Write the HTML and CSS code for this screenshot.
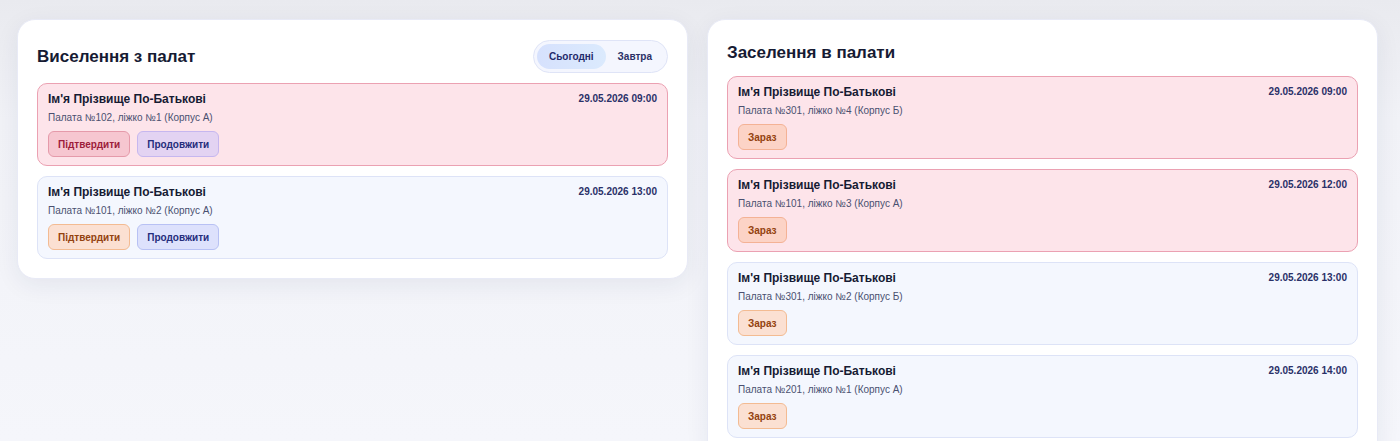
FILE: index.html
```html
<!DOCTYPE html>
<html lang="uk">
<head>
  <meta charset="UTF-8" />
  <meta name="viewport" content="width=device-width, initial-scale=1" />
  <title>Палати</title>
  <link rel="stylesheet" href="styles.css">
</head>
<body>
  <main class="board">
    <section class="panel">
      <div class="panel-head">
        <h2>Виселення з палат</h2>
        <div class="switch">
          <button class="switch-btn active">Сьогодні</button>
          <button class="switch-btn">Завтра</button>
        </div>
      </div>
      <div class="list">
        <div class="item urgent">
          <div class="item-top">
            <span class="name">Ім'я Прізвище По-Батькові</span>
            <span class="time">29.05.2026 09:00</span>
          </div>
          <div class="place">Палата №102, ліжко №1 (Корпус А)</div>
          <div class="actions">
            <button class="act confirm">Підтвердити</button>
            <button class="act extend">Продовжити</button>
          </div>
        </div>
        <div class="item">
          <div class="item-top">
            <span class="name">Ім'я Прізвище По-Батькові</span>
            <span class="time">29.05.2026 13:00</span>
          </div>
          <div class="place">Палата №101, ліжко №2 (Корпус А)</div>
          <div class="actions">
            <button class="act confirm">Підтвердити</button>
            <button class="act extend">Продовжити</button>
          </div>
        </div>
      </div>
    </section>

    <section class="panel">
      <div class="panel-head">
        <h2>Заселення в палати</h2>
      </div>
      <div class="list">
        <div class="item urgent">
          <div class="item-top">
            <span class="name">Ім'я Прізвище По-Батькові</span>
            <span class="time">29.05.2026 09:00</span>
          </div>
          <div class="place">Палата №301, ліжко №4 (Корпус Б)</div>
          <div class="actions">
            <button class="act now">Зараз</button>
          </div>
        </div>
        <div class="item urgent">
          <div class="item-top">
            <span class="name">Ім'я Прізвище По-Батькові</span>
            <span class="time">29.05.2026 12:00</span>
          </div>
          <div class="place">Палата №101, ліжко №3 (Корпус А)</div>
          <div class="actions">
            <button class="act now">Зараз</button>
          </div>
        </div>
        <div class="item">
          <div class="item-top">
            <span class="name">Ім'я Прізвище По-Батькові</span>
            <span class="time">29.05.2026 13:00</span>
          </div>
          <div class="place">Палата №301, ліжко №2 (Корпус Б)</div>
          <div class="actions">
            <button class="act now">Зараз</button>
          </div>
        </div>
        <div class="item">
          <div class="item-top">
            <span class="name">Ім'я Прізвище По-Батькові</span>
            <span class="time">29.05.2026 14:00</span>
          </div>
          <div class="place">Палата №201, ліжко №1 (Корпус А)</div>
          <div class="actions">
            <button class="act now">Зараз</button>
          </div>
        </div>
      </div>
    </section>
  </main>
</body>
</html>
```

FILE: styles.css
```css
html, body {
  margin: 0;
  height: 100%;
}
body {
  font-family: "Liberation Sans", Arial, sans-serif;
  background: linear-gradient(180deg, #e9eaef 0px, #f1f2f7 120px, #f5f6fb 100%);
  color: #1a1f36;
}
.board {
  display: grid;
  grid-template-columns: 1fr 1fr;
  gap: 19px;
  align-items: start;
  padding: 19px 22px 0 17px;
}
.panel {
  background: #fff;
  border: 1px solid #e8eaf6;
  border-radius: 18px;
  padding: 20px 19px 19px 19px;
  box-shadow: 0 6px 24px rgba(30, 40, 90, 0.07);
}
.panel-head {
  display: flex;
  align-items: center;
  justify-content: space-between;
  min-height: 26px;
  margin-bottom: 10px;
}
.panel-head h2 {
  margin: 0;
  font-size: 17px;
  line-height: 26px;
  font-weight: bold;
  color: #161b33;
}
.switch {
  display: flex;
  padding: 3px;
  border: 1px solid #dfe4f7;
  border-radius: 17px;
  background: #f4f6fe;
}
.switch-btn {
  border: none;
  background: transparent;
  font-family: inherit;
  font-size: 10px;
  font-weight: bold;
  color: #2b3166;
  padding: 0 12px;
  height: 25px;
  border-radius: 13px;
  cursor: pointer;
}
.switch-btn.active {
  background: linear-gradient(90deg, #d6e1fd, #dbeafd);
  color: #1f2a6b;
}
.list {
  display: flex;
  flex-direction: column;
  gap: 10px;
}
.item {
  background: #f4f7fe;
  border: 1px solid #dde3f7;
  border-radius: 10px;
  padding: 7px 10px 8px 10px;
}
.item.urgent {
  background: #fde4ea;
  border-color: #eba1b2;
}
.item-top {
  display: flex;
  justify-content: space-between;
  align-items: center;
  height: 16px;
}
.name {
  font-size: 12px;
  line-height: 16px;
  font-weight: bold;
  color: #161b33;
}
.time {
  font-size: 10px;
  line-height: 16px;
  font-weight: bold;
  color: #2a3068;
}
.place {
  margin-top: 4px;
  font-size: 10px;
  line-height: 14px;
  color: #4a5070;
}
.actions {
  display: flex;
  gap: 7px;
  margin-top: 6px;
}
.act {
  height: 26px;
  padding: 0 9px;
  border-radius: 6px;
  border: 1px solid;
  font-family: inherit;
  font-size: 10px;
  font-weight: bold;
  cursor: pointer;
}
.act.confirm {
  background: #fbe0d2;
  border-color: #f3bb92;
  color: #93420f;
}
.urgent .act.confirm {
  background: #f6c6d0;
  border-color: #e59aaa;
  color: #9d1c3b;
}
.act.extend {
  background: #dde1fc;
  border-color: #b8c1f4;
  color: #262d7c;
}
.urgent .act.extend {
  background: #e3d3f2;
  border-color: #c6b7ef;
}
.act.now {
  background: #fbe0d2;
  border-color: #f3bb92;
  color: #93420f;
}
.urgent .act.now {
  background: #fcd3c6;
  border-color: #f4b295;
}
```
